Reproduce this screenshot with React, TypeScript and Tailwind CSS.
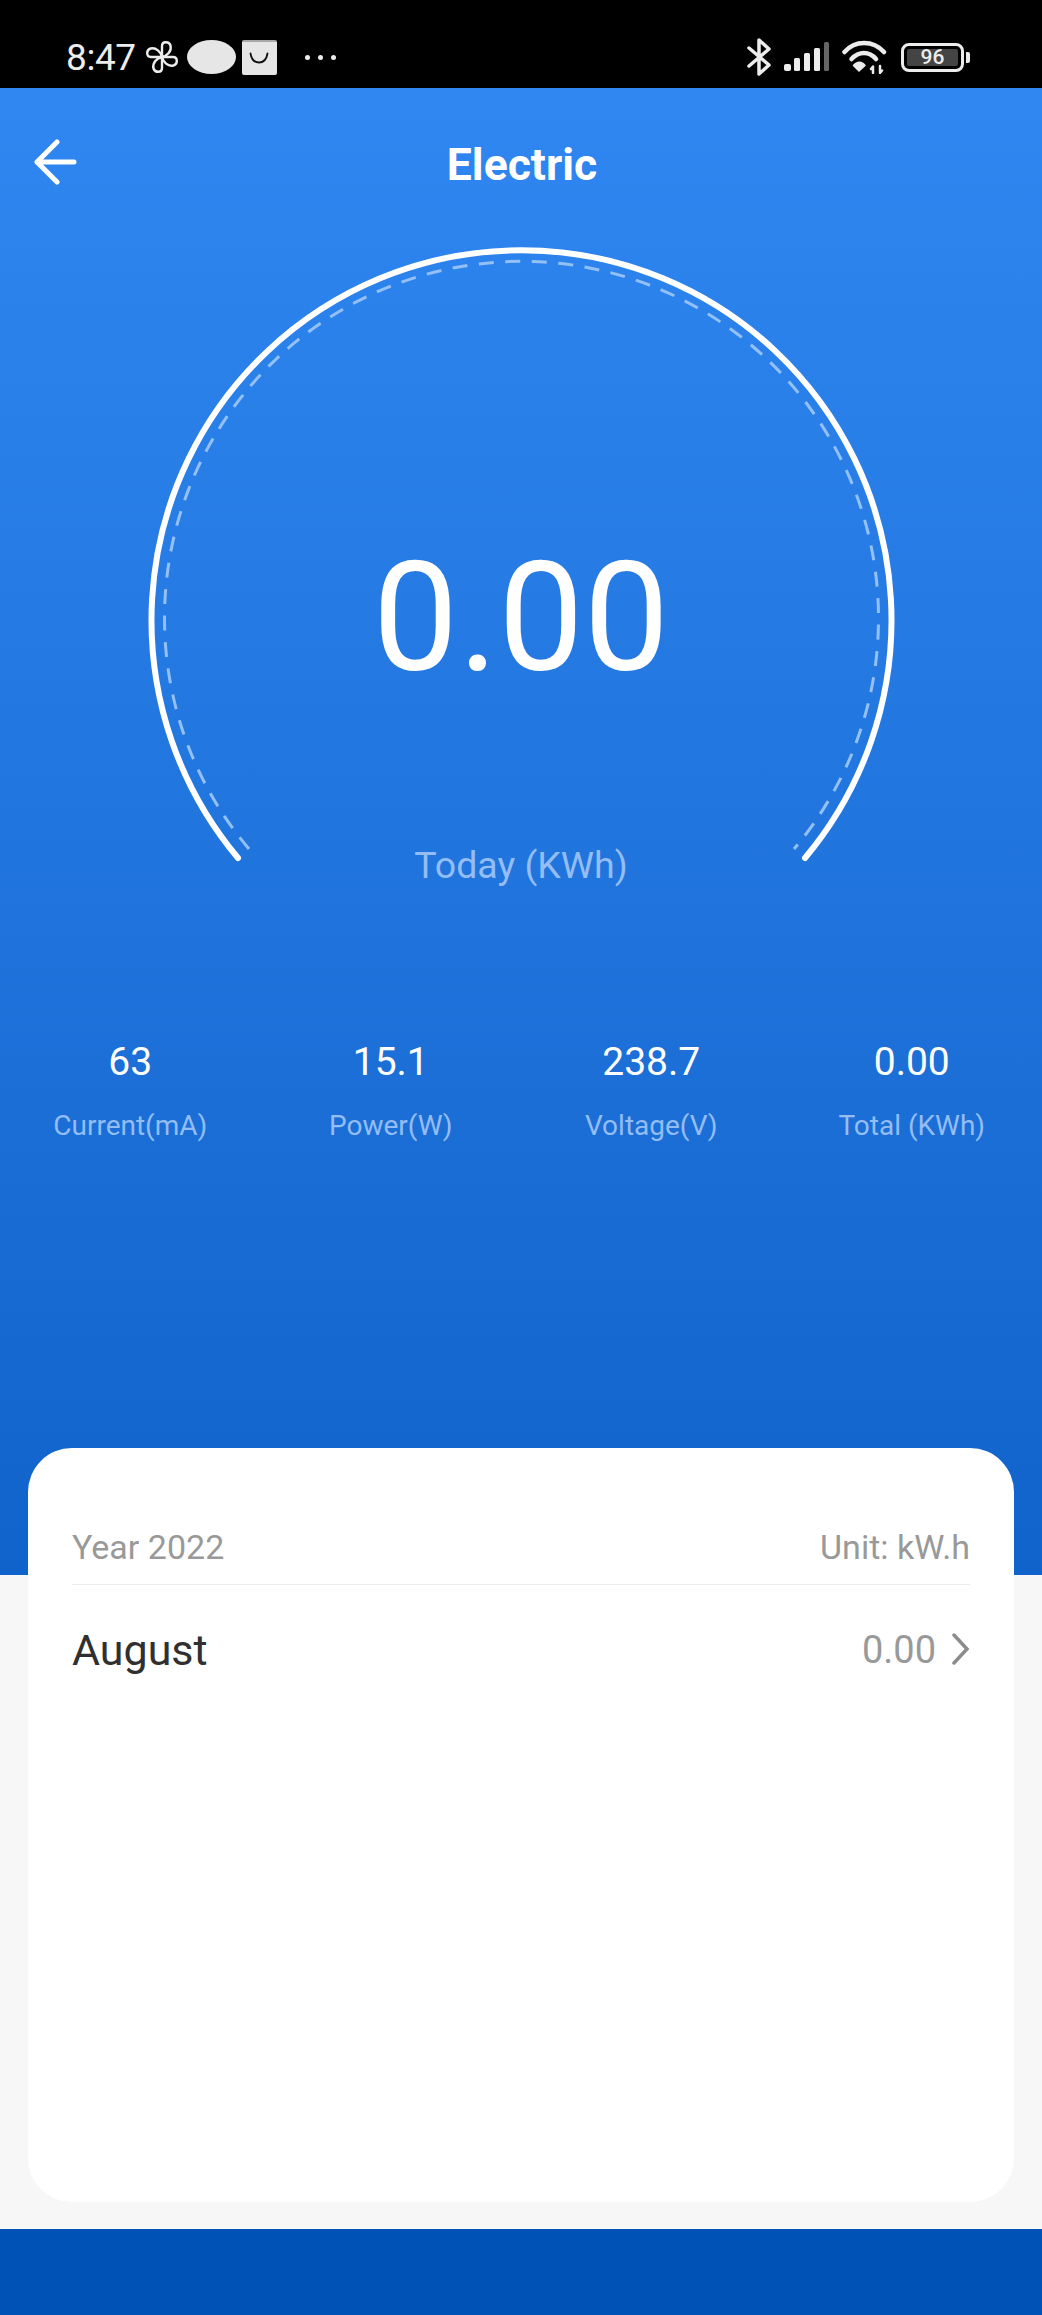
const stats = [
  { value: "63", label: "Current(mA)" },
  { value: "15.1", label: "Power(W)" },
  { value: "238.7", label: "Voltage(V)" },
  { value: "0.00", label: "Total (KWh)" },
];

function StatusBar() {
  return (
    <div className="flex h-[88px] items-center bg-black pl-[66px] pr-[72px] pt-[26px] text-[#ececec]">
      <span className="text-[37px] leading-none tracking-[-0.4px]">8:47</span>
      <svg className="ml-[9px] h-[34px] w-[34px]" viewBox="0 0 34 34" fill="none" stroke="#ececec" strokeWidth="2.4" strokeLinejoin="round">
        <path d="M17 17V6C17 1 24 1 25.5 5.5C27 11 22 16 17 17Z" />
        <path d="M17 17H28C33 17 33 24 28.5 25.5C23 27 18 22 17 17Z" />
        <path d="M17 17V28C17 33 10 33 8.5 28.5C7 23 12 18 17 17Z" />
        <path d="M17 17H6C1 17 1 10 5.5 8.5C11 7 16 12 17 17Z" />
      </svg>
      <div className="ml-[8px] h-[34px] w-[49px] rounded-[50%] bg-[#e6e6e6]" />
      <div className="ml-[6px] flex h-[35px] w-[35px] items-center justify-center rounded-[2px] border-t-[2px] border-[#a8a8a8] bg-[#e6e6e6]">
        <svg className="h-[12px] w-[20px]" viewBox="0 0 20 12" fill="none" stroke="#111" strokeWidth="1.8" strokeLinecap="round">
          <path d="M1.5 1.5C2.5 7.5 6 10.5 10 10.5C14 10.5 17.5 7.5 18.5 1.5" />
        </svg>
      </div>
      <div className="ml-[28px] flex items-center gap-[8px]">
        <span className="h-[5px] w-[5px] rounded-full bg-[#ececec]" />
        <span className="h-[5px] w-[5px] rounded-full bg-[#ececec]" />
        <span className="h-[5px] w-[5px] rounded-full bg-[#ececec]" />
      </div>
      <div className="ml-auto flex items-center">
        <svg className="h-[38px] w-[24px]" viewBox="0 0 24 38" fill="none" stroke="#ececec" strokeWidth="3.5" strokeLinecap="round" strokeLinejoin="round">
          <path d="M2 10L22 27L12 36V2L22 11L2 28" />
        </svg>
        <svg className="ml-[13px] h-[30px] w-[45px]" viewBox="0 0 45 30" fill="#ececec">
          <rect x="0" y="22" width="7" height="7" rx="2" />
          <rect x="10" y="16" width="6" height="13" rx="1.5" />
          <rect x="20" y="11" width="6" height="18" rx="1.5" />
          <rect x="30" y="6" width="6" height="23" rx="1.5" />
          <rect x="40" y="0" width="5" height="29" rx="1.5" fill="#666666" />
        </svg>
        <svg className="ml-[13px] h-[34px] w-[45px]" viewBox="0 0 45 34" fill="none" stroke="#ececec" strokeWidth="4.5" strokeLinecap="round">
          <path d="M2.5 12C13 0 31 0 42 12" />
          <path d="M9.5 19C17 11 27 11 34 19" />
          <path d="M17 31L11.5 25.5C15 21 20 21 23 25.5Z" fill="#ececec" strokeWidth="1.5" strokeLinejoin="round" />
          <path d="M31 33V27M29 29L31 26.5M38 26V32M38 33L40 30.5" strokeWidth="2.5" />
        </svg>
        <div className="ml-[14px] flex h-[29px] w-[63px] items-center justify-center rounded-[8px] border-[3px] border-[#ececec] p-[3px]">
          <div className="flex h-full w-full items-center justify-center rounded-[2px] bg-[#444444] text-[21px] font-medium leading-none text-[#ececec]">96</div>
        </div>
        <div className="ml-[2px] h-[11px] w-[4px] rounded-r-[2px] bg-[#ececec]" />
      </div>
    </div>
  );
}

function Gauge() {
  return (
    <div className="relative h-[640px]">
      <svg className="block h-[640px] w-[1042px]" viewBox="0 0 1042 640" fill="none">
        <path d="M238 618A370 370 0 1 1 805 618" stroke="#ffffff" strokeWidth="6" strokeLinecap="round" />
        <path d="M249 609A357 357 0 1 1 794 609" stroke="#93c0f6" strokeWidth="3" strokeDasharray="15 11.5" />
      </svg>
      <div className="absolute inset-x-0 top-[288px] text-center text-[152px] leading-[180px] text-white">0.00</div>
      <div className="absolute inset-x-0 top-[601px] text-center text-[37.5px] leading-[48px] text-[#93bdf3]">Today (KWh)</div>
    </div>
  );
}

export default function App() {
  return (
    <div className="flex h-[2315px] w-[1042px] flex-col overflow-hidden bg-[#f7f7f7] font-['Roboto',sans-serif]">
      <StatusBar />
      <div className="h-[1487px] bg-gradient-to-b from-[#3087f1] to-[#1063ca]">
        <div className="relative flex h-[152px] items-center justify-center">
          <svg className="absolute left-[34px] top-[51px] h-[46px] w-[44px]" viewBox="0 0 44 46" fill="none" stroke="#ffffff" strokeWidth="5" strokeLinecap="round" strokeLinejoin="round">
            <path d="M3 23H40M23 3L3 23L23 43" />
          </svg>
          <h1 className="ml-[2px] mt-[2px] text-[44.5px] font-bold leading-none text-white">Electric</h1>
        </div>
        <Gauge />
        <div className="mt-[159px] grid grid-cols-4">
          {stats.map((s) => (
            <div key={s.label} className="flex flex-col items-center">
              <div className="text-[39px] leading-[46px] text-white">{s.value}</div>
              <div className="mt-[23px] text-[28px] leading-[36px] text-[#93bdf3]">{s.label}</div>
            </div>
          ))}
        </div>
      </div>
      <div className="mx-[28px] mt-[-127px] h-[754px] rounded-[44px] bg-white px-[44px] pt-[74px]">
        <div className="flex h-[63px] justify-between border-b border-[#ececec] text-[34px] leading-[50px] text-[#999999]">
          <span>Year 2022</span>
          <span>Unit: kW.h</span>
        </div>
        <div className="flex h-[130px] items-center justify-between">
          <span className="text-[43px] text-[#303030]">August</span>
          <div className="flex items-center gap-[16px]">
            <span className="text-[38px] text-[#999999]">0.00</span>
            <svg className="mb-[3px] h-[32px] w-[18px]" viewBox="0 0 18 32" fill="none" stroke="#8c8c8c" strokeWidth="3.5" strokeLinecap="round" strokeLinejoin="miter">
              <path d="M2 2L15 16L2 30" />
            </svg>
          </div>
        </div>
      </div>
      <div className="mt-[27px] h-[86px] bg-[#0052b6]" />
    </div>
  );
}
